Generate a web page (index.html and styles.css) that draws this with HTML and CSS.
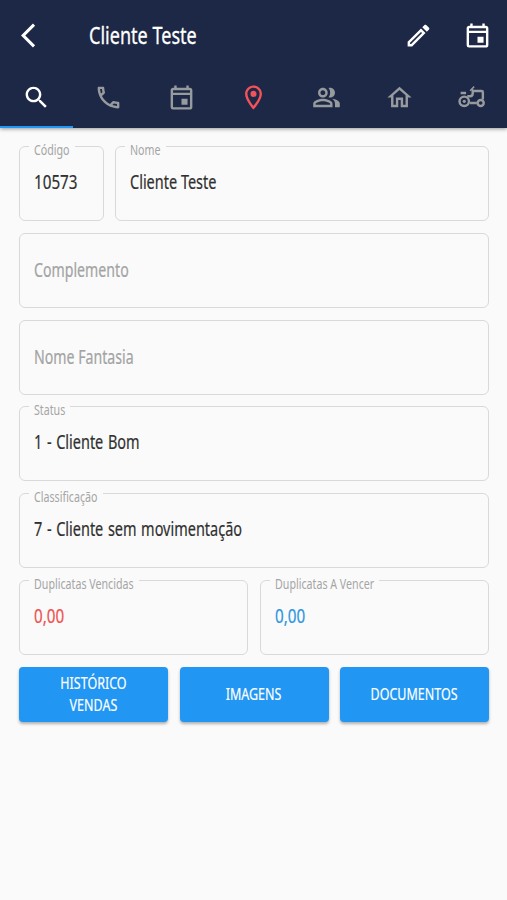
FILE: index.html
```html
<!DOCTYPE html>
<html lang="pt-BR">
<head>
<meta charset="utf-8">
<meta name="viewport" content="width=device-width, initial-scale=1">
<title>Cliente Teste</title>
<link rel="stylesheet" href="styles.css">
</head>
<body>
<header class="header">
  <div class="appbar">
    <svg class="icon" viewBox="0 0 24 24"><path d="M11.67 3.87L9.9 2.1 0 12l9.9 9.9 1.77-1.77L3.54 12z"/></svg>
    <h1 class="title"><span class="narrow">Cliente Teste</span></h1>
    <svg class="icon" viewBox="0 0 24 24"><path d="M14.06 9.02l.92.92L5.92 19H5v-.92l9.06-9.06M17.66 3c-.25 0-.51.1-.7.29l-1.83 1.83 3.75 3.75 1.83-1.83c.39-.39.39-1.02 0-1.41l-2.34-2.34c-.2-.2-.45-.29-.71-.29zm-3.6 3.19L3 17.25V21h3.75L17.81 9.94l-3.75-3.75z"/></svg>
    <svg class="icon" viewBox="0 0 24 24"><path d="M19 4h-1V2h-2v2H8V2H6v2H5c-1.11 0-1.99.9-1.99 2L3 20a2 2 0 0 0 2 2h14c1.1 0 2-.9 2-2V6c0-1.1-.9-2-2-2zm0 16H5V10h14v10zm0-12H5V6h14v2zm-7 5h5v5h-5z"/></svg>
  </div>
  <nav class="tabs">
    <div class="tab tab-active"><svg class="icon" viewBox="0 0 24 24"><path d="M15.5 14h-.79l-.28-.27C15.41 12.59 16 11.11 16 9.5 16 5.91 13.09 3 9.5 3S3 5.91 3 9.5 5.91 16 9.5 16c1.61 0 3.09-.59 4.23-1.57l.27.28v.79l5 4.99L20.49 19l-4.99-5zm-6 0C7.01 14 5 11.99 5 9.5S7.01 5 9.5 5 14 7.01 14 9.5 11.99 14 9.5 14z"/></svg></div>
    <div class="tab"><svg class="icon" viewBox="0 0 24 24"><path d="M6.54 5c.06.89.21 1.76.45 2.59l-1.2 1.2c-.41-1.2-.67-2.47-.76-3.79h1.51m9.86 12.02c.85.24 1.72.39 2.6.45v1.49c-1.32-.09-2.59-.35-3.8-.75l1.2-1.19M7.5 3H4c-.55 0-1 .45-1 1 0 9.39 7.61 17 17 17 .55 0 1-.45 1-1v-3.49c0-.55-.45-1-1-1-1.24 0-2.45-.2-3.57-.57-.1-.04-.21-.05-.31-.05-.26 0-.51.1-.71.29l-2.2 2.2c-2.83-1.45-5.15-3.76-6.59-6.59l2.2-2.2c.28-.28.36-.67.25-1.02C8.7 6.45 8.5 5.25 8.5 4c0-.55-.45-1-1-1z"/></svg></div>
    <div class="tab"><svg class="icon" viewBox="0 0 24 24"><path d="M19 4h-1V2h-2v2H8V2H6v2H5c-1.11 0-1.99.9-1.99 2L3 20a2 2 0 0 0 2 2h14c1.1 0 2-.9 2-2V6c0-1.1-.9-2-2-2zm0 16H5V10h14v10zm0-12H5V6h14v2zm-7 5h5v5h-5z"/></svg></div>
    <div class="tab tab-alert"><svg class="icon" viewBox="0 0 24 24"><path d="M12 2C8.13 2 5 5.13 5 9c0 5.25 7 13 7 13s7-7.75 7-13c0-3.87-3.13-7-7-7zM7 9c0-2.76 2.24-5 5-5s5 2.24 5 5c0 2.88-2.88 7.19-5 9.88C9.92 16.21 7 11.85 7 9z"/><circle cx="12" cy="9" r="2.5"/></svg></div>
    <div class="tab"><svg class="icon" viewBox="0 0 24 24"><path d="M16.67 13.13C18.04 14.06 19 15.32 19 17v3h4v-3c0-2.18-3.57-3.47-6.33-3.87zM15 12c2.21 0 4-1.79 4-4s-1.79-4-4-4c-.47 0-.91.1-1.33.24C14.5 5.27 15 6.58 15 8s-.5 2.73-1.33 3.76c.42.14.86.24 1.33.24zM9 12c2.21 0 4-1.79 4-4s-1.79-4-4-4-4 1.79-4 4 1.79 4 4 4zm0-6c1.1 0 2 .9 2 2s-.9 2-2 2-2-.9-2-2 .9-2 2-2zM9 13c-2.67 0-8 1.34-8 4v3h16v-3c0-2.66-5.33-4-8-4zm6 5H3v-.99C3.2 16.29 6.3 15 9 15s5.8 1.29 6 2v1z"/></svg></div>
    <div class="tab"><svg class="icon" viewBox="0 0 24 24"><path d="M12 5.69l5 4.5V18h-2v-6H9v6H7v-7.81l5-4.5M12 3L2 12h3v8h6v-6h2v6h6v-8h3L12 3z"/></svg></div>
    <div class="tab"><svg class="icon icon-line" viewBox="0 0 24 24"><circle cx="6" cy="15.2" r="3.9"/><circle class="hub" cx="6" cy="15.2" r="1.3"/><circle cx="19.6" cy="16.6" r="2.5"/><path d="M3 8.3H7.5M8.5 10.9h2.3q2.2 0 2.2-2.2V6.6h7.4q1 0 1 1V13.6M10.8 16.6h5.6"/><path class="thin" d="M10.8 6.4l3.4-3.4M11.9 4.6L14 6.8"/></svg></div>
  </nav>
</header>
<main class="form">
  <div class="row">
    <div class="field field-code"><label class="label"><span class="narrow">Código</span></label><span class="value numeric narrow">10573</span></div>
    <div class="field"><label class="label"><span class="narrow">Nome</span></label><span class="value narrow">Cliente Teste</span></div>
  </div>
  <div class="field field-empty"><span class="value narrow">Complemento</span></div>
  <div class="field field-empty"><span class="value narrow">Nome Fantasia</span></div>
  <div class="field"><label class="label"><span class="narrow">Status</span></label><span class="value coded narrow">1 - Cliente Bom</span></div>
  <div class="field"><label class="label"><span class="narrow">Classificação</span></label><span class="value coded narrow">7 - Cliente sem movimentação</span></div>
  <div class="row">
    <div class="field"><label class="label"><span class="narrow">Duplicatas Vencidas</span></label><span class="value numeric value-red narrow">0,00</span></div>
    <div class="field"><label class="label"><span class="narrow">Duplicatas A Vencer</span></label><span class="value numeric value-blue narrow">0,00</span></div>
  </div>
  <div class="row">
    <button class="button"><span class="narrow">HISTÓRICO<br>VENDAS</span></button>
    <button class="button"><span class="narrow">IMAGENS</span></button>
    <button class="button"><span class="narrow">DOCUMENTOS</span></button>
  </div>
</main>
<script src="labels.js"></script>
</body>
</html>
```
FILE: styles.css
```css
* { box-sizing: border-box; }

body {
  margin: 0;
  min-height: 900px;
  background: #fafafa;
  color: #303030;
  font-family: "Noto Sans", "Open Sans", sans-serif;
}

.header {
  height: 127.5px;
  background: #1d2746;
  box-shadow: 0 1px 4px rgba(0, 0, 0, .4);
}

.appbar {
  display: flex;
  align-items: center;
  height: 70px;
  padding: 0 15px 0 21px;
  color: #fff;
}

.icon {
  flex: none;
  display: block;
  width: 29px;
  height: 29px;
  fill: currentColor;
}

.appbar .icon + .icon { margin-left: 30px; }

.icon-line {
  fill: none;
  stroke: currentColor;
  stroke-width: 2;
}

.icon-line .thin { stroke-width: 1.2; }

.icon-line .hub {
  fill: currentColor;
  stroke: none;
}

.title {
  flex: 1;
  margin: 0 0 0 39px;
  font-size: 23.7px;
  line-height: 32px;
  font-weight: 400;
  -webkit-text-stroke: .3px currentColor;
}

.narrow {
  display: inline-block;
  transform: scaleX(.762);
  transform-origin: left center;
  white-space: nowrap;
}

.tabs {
  display: grid;
  grid-template-columns: repeat(7, 1fr);
  width: 508px;
  height: 57.5px;
  color: #979b9d;
}

.tab {
  display: flex;
  justify-content: center;
  align-items: center;
  border-bottom: 2.5px solid transparent;
}

.tab-active {
  color: #fff;
  border-bottom-color: #2196f3;
}

.tab-alert { color: #f4525a; }

.form {
  display: flex;
  flex-direction: column;
  gap: 11.8px;
  padding: 18.5px 18px 0 19px;
}

.row {
  display: flex;
  gap: 11.5px;
}

.field {
  position: relative;
  flex: 1 1 0;
  min-width: 0;
  height: 75px;
  padding: 21px 14px 0;
  border: 1px solid #d9d9d9;
  border-radius: 6px;
}

.form > .field { flex: none; }
.row > .field-code { flex: 0 0 84.5px; }

.label {
  position: absolute;
  top: -7px;
  left: 9px;
  height: 18px;
  padding: 0 5px;
  background: #fafafa;
  color: #a5a5a5;
  font-size: 14px;
  line-height: 20px;
}

.value {
  font-size: 19px;
  line-height: 28px;
  -webkit-text-stroke: .2px currentColor;
}

.coded { word-spacing: 1.1px; }
.value.numeric { transform: scaleX(.8); }

.field-empty { padding-top: 22px; }
.field-empty .value {
  color: #a3a3a3;
  transform: scaleX(.745);
}
.value-red { color: #ef5350; }
.value-blue { color: #2f96df; }

.button {
  display: flex;
  justify-content: center;
  align-items: center;
  flex: 1 1 0;
  min-width: 0;
  height: 55px;
  padding: 0;
  border: 0;
  border-radius: 4px;
  background: #2196f3;
  box-shadow: 0 2px 3px rgba(0, 0, 0, .3);
  color: #fff;
  font-family: inherit;
  font-size: 16.4px;
  line-height: 22px;
  -webkit-text-stroke: .2px currentColor;
}

.button .narrow { transform-origin: center; }
```
FILE: labels.js
```js
// The condensed text is narrower than its layout box; fit each label's notch to it.
document.querySelectorAll('.label').forEach(function (label) {
  var text = label.firstElementChild;
  label.style.width = (text.getBoundingClientRect().width + 10) + 'px';
});
```
